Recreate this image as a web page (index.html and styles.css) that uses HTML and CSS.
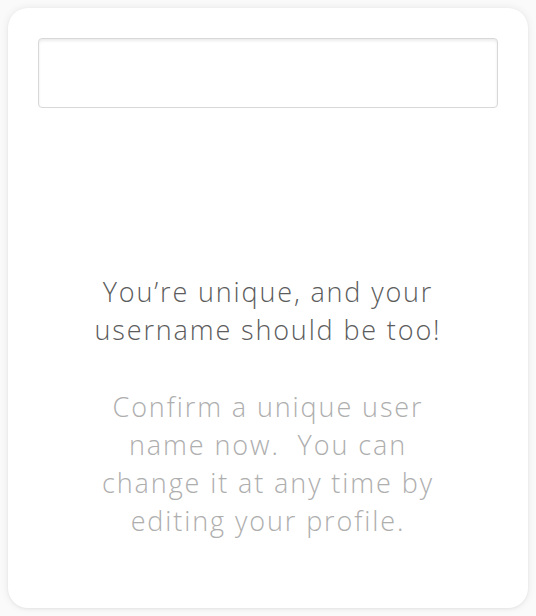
FILE: index.html
```html
<!DOCTYPE html>
<html>
<head>
<meta charset="utf-8">
<link rel="stylesheet" href="styles.css">
</head>
<body>
<div class="card">
  <input class="field" type="text" aria-label="Username">
  <div class="message">
    <p class="headline">You’re unique, and your username should be too!</p>
    <p class="detail">Confirm a unique user name now.&nbsp; You can change it at any time by editing your profile.</p>
  </div>
</div>
</body>
</html>
```
FILE: styles.css
```css
html, body {
  margin: 0;
  padding: 0;
  background: #fafafa;
}
body {
  padding: 8px;
  font-family: "Open Sans", "Liberation Sans", sans-serif;
}
.card {
  box-sizing: border-box;
  width: 520px;
  height: 600px;
  background: #ffffff;
  border-radius: 20px;
  box-shadow: 0 0 8px rgba(0, 0, 0, 0.08), 0 1px 3px rgba(0, 0, 0, 0.05);
  padding: 30px;
  display: flex;
  flex-direction: column;
}
.field {
  box-sizing: border-box;
  width: 460px;
  height: 70px;
  border: 1px solid #d8d8d8;
  border-radius: 4px;
  box-shadow: inset 0 2px 3px rgba(0, 0, 0, 0.08);
  background: #fff;
  margin: 0;
  padding: 0 12px;
  outline: none;
}
.message {
  margin-top: 165px;
  text-align: center;
  padding: 0 36px;
}
.headline {
  margin: 0;
  font-size: 27px;
  font-weight: 300;
  letter-spacing: 1.85px;
  line-height: 38px;
  color: #5c5c5c;
}
.detail {
  margin: 39px 0 0;
  padding: 0 14px;
  font-size: 27px;
  font-weight: 300;
  letter-spacing: 1.9px;
  line-height: 38px;
  color: #aeaeae;
}
```
